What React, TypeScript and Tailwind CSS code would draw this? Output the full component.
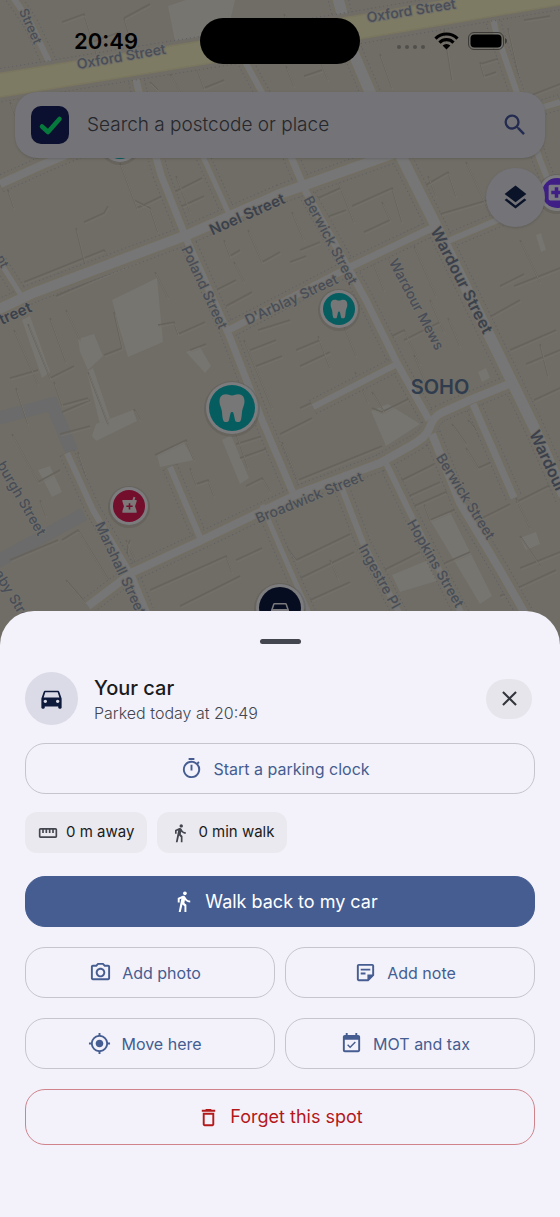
import { ButtonHTMLAttributes, ReactNode } from 'react';
import clsx from 'clsx';
import type { IconType } from 'react-icons';
import {
  MdClose,
  MdDeleteOutline,
  MdDirectionsCar,
  MdDirectionsWalk,
  MdEventAvailable,
  MdLayers,
  MdLocalHospital,
  MdLocalPharmacy,
  MdMyLocation,
  MdOutlinePhotoCamera,
  MdOutlineStickyNote2,
  MdOutlineTimer,
  MdSearch,
  MdStraighten,
} from 'react-icons/md';

const roads = [
  { d: 'M8 -10 L30 22 L51 66', w: 7 },
  { d: 'M133 66 L145 118 L161 175 L186 238 L229 335 L262 420 L293 493', w: 8 },
  { d: 'M200 150 L228 212', w: 6 },
  { d: 'M236 45 L266 100', w: 7 },
  { d: 'M0 184 L42 165 L120 132', w: 9 },
  { d: 'M0 262 L24 300', w: 6 },
  { d: 'M286 145 L306 192 L366 300 L397 363 L429 420', w: 8 },
  { d: 'M225 332 L350 267 L432 228', w: 8 },
  { d: 'M448 241 L500 219 L560 193', w: 7 },
  { d: 'M313 407 L397 364', w: 7 },
  { d: 'M488 -5 L496 32 L516 90 L540 160 L552 190', w: 7 },
  { d: 'M540 108 L560 102', w: 7 },
  { d: 'M67 453 L93 510 L133 578 L150 620', w: 7 },
  { d: 'M170 467 L201 540', w: 7 },
  { d: 'M432 434 L460 503 L500 570 L540 640', w: 9 },
  { d: 'M473 404 L492 447 L514 498', w: 8 },
  { d: 'M386 463 L410 513 L470 630', w: 7 },
  { d: 'M341 486 L363 543 L408 630', w: 7 },
  { d: 'M262 505 L280 547 L312 620', w: 6 },
  { d: 'M337 -5 L352 50 L370 92 L404 162 L434 222 L493 343 L533 425 L566 500', w: 12 },
  { d: 'M-5 311 L33 293 L187 235 L280 194 L392 154', w: 11 },
  { d: 'M514 382 L470 400 L441 413 Q433 417 429 429 Q426 437 412 445 L380 463 L300 493 L200 541 L133 572 L88 606', w: 9 },
];

// pale yards and passages between the buildings
const courts = [
  'M112 300 L157 278 L163 342 L128 357 L120 330 Z',
  'M78 339 L94 334 L103 356 L88 370 L80 352 Z',
  'M186 352 L200 347 L211 366 L205 373 Z',
  'M92 436 L96 424 L133 410 L137 421 L96 441 Z',
  'M87 372 L93 368 L110 418 L100 424 Z',
  'M157 455 L183 441 L194 460 L160 467 Z',
  'M371 411 L388 404 L420 424 L386 446 Z',
  'M168 6 L198 -4 L236 -4 L228 30 L176 46 Z',
  'M22 320 L30 316 L50 372 L42 378 Z',
  'M222 440 L231 435 L249 478 L240 484 Z',
  'M38 470 L50 466 L62 492 L52 497 Z',
  'M392 575 L428 560 L440 580 L400 592 Z',
  'M520 538 L536 532 L540 544 L526 550 Z',
  'M478 372 L486 368 L490 378 L482 382 Z',
  'M536 235 L541 233 L546 250 L541 252 Z',
  'M430 520 L450 512 L492 596 L480 604 Z',
];

// walls, drawn as the shaded side of each building
const walls = [
  'M62 22 L84 14 L96 52 M124 18 L150 4 M124 18 L132 44 M92 42 L120 32',
  'M10 102 L22 132 M34 98 L46 126 M60 92 L66 108 M150 82 L158 90 M196 66 L204 88 L224 80 M170 74 L180 92',
  'M24 282 L104 250 L110 262 M14 208 L8 190 M56 296 L186 240',
  'M120 163 L137 208 L162 196 M76 228 L86 268 M84 222 L104 213 L108 206 M134 200 L150 208 L158 232',
  'M174 192 L202 178 M182 206 L204 196 M176 176 L190 212',
  'M155 272 L168 298 M196 258 L206 286 M224 240 L230 256 L240 250 M234 262 L244 282 M262 262 L280 252 M248 230 L262 262',
  'M216 290 L236 280 M226 306 L252 292',
  'M14 330 L38 384 M28 324 L50 378 L74 366 M50 318 L66 362 M66 310 L80 340 M104 355 L122 348 L114 312 M10 378 L38 370',
  'M16 388 L28 424 M54 382 L62 405 L88 398 M62 412 L90 400 M88 372 L108 424 M134 409 L140 420 M155 455 L186 440 L194 460',
  'M158 325 L174 322 L178 334 L205 322 M190 350 L206 344 M60 434 L90 426 M78 452 L92 494 M12 434 L38 482 L60 470 M40 500 L46 516',
  'M168 470 L190 520 M190 468 L196 484 L208 480 L214 496 M126 540 L136 562 L148 564 L186 546 M130 540 Q124 552 132 562',
  'M62 540 L78 530 L112 586 M10 560 L58 540 M66 580 L90 608 M150 590 L226 556 L232 572 M180 606 L240 576 M236 560 L262 548',
  'M236 444 L262 436 M240 458 L268 448 M246 486 L262 478 L270 492 M250 350 L276 340 M256 366 L282 356 M228 410 L248 468',
  'M244 340 L272 408 M258 330 L290 320 M296 350 L320 340 M300 366 L330 352 M318 336 L330 368 M300 408 L330 394 M344 326 L356 356',
  'M280 434 L312 418 M282 442 L298 480 L382 446 M372 408 L382 412 L410 398 M372 392 L384 412 M355 372 L368 402',
  'M414 355 L428 388 M404 340 L440 322 M392 336 L404 330 L420 364 M430 300 L444 332 M448 318 L460 346',
  'M296 560 L350 534 M292 582 L354 552 M284 544 L296 560 M330 560 L338 578 M350 500 L380 572 L420 552 M310 600 L350 582',
  'M394 484 L434 464 M400 500 L440 482 M414 506 L450 490 L458 508 L430 520 L424 504 M466 448 L478 468 L500 458 M468 420 L484 440',
  'M478 436 L488 432 M452 424 L466 444 M516 498 L530 528 M516 502 L556 482 M520 536 L540 566 M470 524 L510 504 M520 568 L560 552',
  'M424 186 L448 172 L456 196 M428 176 L436 196 M440 214 L488 200 M466 162 L492 218 M446 246 L480 320 M484 320 L520 300 M500 286 L524 274',
  'M318 198 L340 188 M336 176 L354 222 M324 218 L346 210 M352 206 L392 188 L402 222 M364 232 L390 220 L382 202 M392 240 L420 226',
  'M300 250 L320 242 M292 212 L304 240 M290 262 L306 256 M336 262 L346 258 M372 260 L384 290 M386 252 L398 280 M414 246 L436 296',
  'M480 64 L500 58 M480 62 L484 76 L496 72 M444 30 L452 80 M508 28 L524 98 L560 84 M524 20 L550 16 M380 54 L392 88',
  'M284 14 L300 50 M300 60 L330 48 M304 76 L322 70 M286 66 L294 86 M320 60 L328 80',
  'M510 350 L556 330 M526 364 L560 350 M534 400 L560 388 M540 344 L548 376 M520 240 L540 282 M514 286 L560 268',
  'M438 566 L470 552 M500 596 L556 570 M484 430 L490 446',
];

const labels = [
  { text: 'Street', x: 31, y: 26, r: 66 },
  { text: 'Oxford Street', x: 121, y: 56, r: -10, size: 14 },
  { text: 'Oxford Street', x: 411, y: 10, r: -9, size: 14 },
  { text: 'Noel Street', x: 247, y: 214, r: -24, size: 15, bold: true },
  { text: 'Poland Street', x: 205, y: 287, r: 65, size: 14 },
  { text: 'Berwick Street', x: 331, y: 240, r: 62, size: 14 },
  { text: "D'Arblay Street", x: 291, y: 299, r: -25, size: 14 },
  { text: 'Wardour Street', x: 462, y: 280, r: 63, size: 16, bold: true },
  { text: 'Wardour Mews', x: 417, y: 304, r: 62, size: 14 },
  { text: 'treet', x: 15, y: 313, r: -24, size: 15, bold: true },
  { text: 'nt', x: 3, y: 261, r: 64 },
  { text: 'Broadwick Street', x: 309, y: 497, r: -22, size: 14 },
  { text: 'Berwick Street', x: 466, y: 496, r: 58, size: 14 },
  { text: 'Wardour Street', x: 559, y: 484, r: 65, size: 16, bold: true },
  { text: 'Hopkins Street', x: 436, y: 563, r: 60, size: 14 },
  { text: 'Ingestre Pl', x: 380, y: 576, r: 61, size: 14 },
  { text: 'Marshall Street', x: 121, y: 568, r: 65, size: 14 },
  { text: 'burgh Street', x: 22, y: 498, r: 60, size: 14 },
  { text: 'aby Street', x: 16, y: 600, r: 59, size: 14 },
];

const ToothIcon = ({ x, y, size }: { x: number; y: number; size: number }) => (
  <svg x={x} y={y} width={size} height={size} viewBox="0 0 24 24" fill="#777777">
    <path d="M7 1C3.6 1 2 3.400 2 6.800c0 3 1.300 4.400 1.800 7.200.5 2.700.3 5.200 1.100 7.500.4 1.200.9 1.600 2 1.600h1c1 0 1.500-.5 1.700-1.500l1.100-5c.2-1 .6-1.500 1.300-1.500s1.100.5 1.300 1.500l1.100 5c.2 1 .7 1.500 1.700 1.500h1c1.100 0 1.600-.4 2-1.600.8-2.300.6-4.800 1.100-7.500.5-2.800 1.800-4.200 1.800-7.200C22 3.400 20.400 1 17 1c-2 0-3.200.9-5 .9S9 1 7 1Z" />
  </svg>
);

const Pin = ({
  x,
  y,
  r,
  fill,
  children,
}: {
  x: number;
  y: number;
  r: number;
  fill: string;
  children?: ReactNode;
}) => (
  <g>
    <circle cx={x} cy={y + 1} r={r + 2} fill="#4c4945" opacity={0.25} />
    <circle cx={x} cy={y} r={r} fill="#7c7c7e" />
    <circle cx={x} cy={y} r={r - 3} fill={fill} />
    {children}
  </g>
);

const StreetMap = () => (
  <svg
    className="absolute inset-0 size-full font-[Inter,sans-serif]"
    viewBox="0 0 560 645"
    preserveAspectRatio="xMidYMin slice"
    aria-hidden="true"
  >
    <rect width="560" height="645" fill="#706d66" />
    {courts.map(d => (
      <path key={d} d={d} fill="#767570" />
    ))}
    <path d="M-5 419 L52 404 L72 452" fill="none" stroke="#6b6b6b" strokeWidth={13} />
    <path d="M-5 563 L84 514" fill="none" stroke="#6b6b6b" strokeWidth={13} />
    {walls.map(d => (
      <g key={d} fill="none">
        <path d={d} stroke="#66625c" strokeWidth={1.5} />
        <path d={d} stroke="#75726b" strokeWidth={1} transform="translate(1 2)" />
      </g>
    ))}

    {/* pavement dots, then casing, then the carriageway */}
    {roads.map(({ d, w }) => (
      <g key={d} fill="none">
        <path d={d} stroke="#5f5f62" strokeWidth={w + 9} strokeDasharray="1 3" />
        <path d={d} stroke="#706d66" strokeWidth={w + 7} />
      </g>
    ))}
    {roads.map(({ d, w }) => (
      <path key={d} d={d} fill="none" stroke="#736e60" strokeWidth={w + 1} />
    ))}
    {roads.map(({ d, w }) => (
      <path key={d} d={d} fill="none" stroke="#767677" strokeWidth={w - 1} />
    ))}
    <g fill="none">
      <path d="M-5 86 L200 53 L360 27 L565 -8" stroke="#5f5f62" strokeWidth={34} strokeDasharray="1 3" />
      <path d="M-5 86 L200 53 L360 27 L565 -8" stroke="#706d66" strokeWidth={32} />
      <path d="M-5 86 L200 53 L360 27 L565 -8" stroke="#7a765f" strokeWidth={25} />
      <path d="M-5 86 L200 53 L360 27 L565 -8" stroke="#7d7b64" strokeWidth={22} />
    </g>

    {labels.map(({ text, x, y, r, size = 13, bold }) => (
      <text
        key={`${text}-${x}`}
        transform={`translate(${x} ${y}) rotate(${r})`}
        textAnchor="middle"
        dominantBaseline="central"
        fontSize={size}
        fontWeight={bold ? 600 : 500}
        fill={bold ? '#3b414b' : '#484d56'}
        stroke="#72706b"
        strokeWidth={2}
        paintOrder="stroke"
      >
        {text}
      </text>
    ))}
    <text
      x={440}
      y={387}
      textAnchor="middle"
      dominantBaseline="central"
      fontSize={20}
      fontWeight={600}
      fill="#2f3c4e"
    >
      SOHO
    </text>

    <Pin x={120} y={143} r={19} fill="#065d60" />
    <Pin x={339} y={309} r={19} fill="#065d60">
      <ToothIcon x={329} y={299} size={20} />
    </Pin>
    <Pin x={232} y={408} r={26} fill="#065d60">
      <ToothIcon x={217} y={393} size={30} />
    </Pin>
    <Pin x={129} y={506} r={19} fill="#730f2d">
      <MdLocalPharmacy x={120} y={496} size={19} color="#7d797b" />
    </Pin>
    <Pin x={557} y={193} r={18} fill="#3f1f86">
      <MdLocalHospital x={546} y={182} size={21} color="#7b7982" />
    </Pin>
    <Pin x={280} y={608} r={24} fill="#070d20">
      <MdDirectionsCar x={268} y={598} size={24} color="#7a7a7c" />
    </Pin>
  </svg>
);

const StatusBar = () => (
  <div className="grid grid-cols-[1fr_160px_1fr] items-center pt-[18px]">
    <div className="pl-3 text-center text-[22px] leading-7 font-semibold text-black">20:49</div>
    <div className="h-[46px] rounded-full bg-black" />
    <div className="flex items-center justify-center gap-[9px] pr-4">
      <div className="flex gap-1 pt-3">
        {[0, 1, 2, 3].map(dot => (
          <span key={dot} className="size-1 rounded-full bg-[#514f4b]" />
        ))}
      </div>
      <svg width="25" height="18" viewBox="0 0 25 18" aria-hidden="true">
        <g fill="none" stroke="#000" strokeWidth="3.200">
          <path d="M1.500 6.600 A15.500 15.500 0 0 1 23.500 6.600" />
          <path d="M5.500 10.600 A9.900 9.900 0 0 1 19.500 10.600" />
        </g>
        <path d="M12.500 17.500 L8.600 13.600 A5.500 5.500 0 0 1 16.400 13.600 Z" />
      </svg>
      <svg width="39" height="18" viewBox="0 0 39 18" aria-hidden="true">
        <rect x="0.500" y="0.500" width="35" height="17" rx="5.500" fill="none" stroke="#3c3b38" />
        <rect x="2.500" y="2.500" width="31" height="13" rx="4" />
        <path d="M37 6 Q39 7 39 9 Q39 11 37 12 Z" fill="#3c3b38" />
      </svg>
    </div>
  </div>
);

const SearchBar = () => (
  <form className="mx-[15px] mt-7 flex h-[66px] items-center rounded-[22px] bg-[#747378] px-4 shadow-sm">
    <svg width="38" height="38" viewBox="0 0 38 38" className="shrink-0" aria-hidden="true">
      <rect width="38" height="38" rx="10" fill="#0b1030" />
      <path
        d="M11 20.500 L17 26 L28.500 13"
        fill="none"
        stroke="#067a3c"
        strokeWidth="4.500"
        strokeLinecap="round"
        strokeLinejoin="round"
      />
    </svg>
    <input
      type="search"
      aria-label="Search a postcode or place"
      placeholder="Search a postcode or place"
      className="ml-[18px] min-w-0 flex-1 bg-transparent text-[19px] font-light text-[#26272b] outline-none placeholder:text-[#26272b]"
    />
    <button type="submit" aria-label="Search" className="text-[#232c50]">
      <MdSearch size={28} />
    </button>
  </form>
);

const SheetButton = ({
  icon: Icon,
  label,
  variant = 'outline',
  ...rest
}: {
  icon: IconType;
  label: string;
  variant?: 'outline' | 'filled' | 'danger';
} & ButtonHTMLAttributes<HTMLButtonElement>) => (
  <button
    type="button"
    className={clsx(
      'flex w-full items-center justify-center gap-[10px] rounded-[20px] border',
      variant === 'outline' && 'h-[51px] border-[#c6c5cd] pr-[10px] text-base text-[#455d91]',
      variant === 'filled' && 'h-[51px] border-[#455d91] bg-[#455d91] pr-[10px] text-lg text-white',
      variant === 'danger' && 'h-14 border-[#d0838b] text-lg text-[#b3181a]'
    )}
    {...rest}
  >
    <Icon size={23} />
    {label}
  </button>
);

const Chip = ({ icon: Icon, label }: { icon: IconType; label: string }) => (
  <div className="flex h-[41px] items-center gap-2 rounded-xl bg-[#eae9ef] px-[13px] text-[15px] text-[#1a1b20]">
    <Icon size={20} className="text-[#44464f]" />
    {label}
  </div>
);

const CarSheet = () => (
  <section className="relative -mt-[34px] rounded-t-[34px] bg-[#f3f2fa] px-[25px] pt-7 pb-[72px]">
    <div className="mx-auto h-[5px] w-[41px] rounded-full bg-[#44464f]" />

    <header className="mt-7 flex items-center">
      <div className="flex size-[53px] items-center justify-center rounded-full bg-[#dadbe6] text-[#0d1a3c]">
        <MdDirectionsCar size={27} />
      </div>
      <div className="ml-4 flex-1 pt-[3px]">
        <h1 className="text-xl leading-[26px] font-medium text-[#1a1b20]">Your car</h1>
        <p className="text-base font-light text-[#44464f]">Parked today at 20:49</p>
      </div>
      <button
        type="button"
        aria-label="Close"
        className="mr-[3px] flex h-10 w-[46px] items-center justify-center rounded-full bg-[#e6e5ec] text-[#33353d]"
      >
        <MdClose size={25} />
      </button>
    </header>

    <div className="mt-[18px]">
      <SheetButton icon={MdOutlineTimer} label="Start a parking clock" />
    </div>

    <div className="mt-[18px] flex gap-[10px]">
      <Chip icon={MdStraighten} label="0 m away" />
      <Chip icon={MdDirectionsWalk} label="0 min walk" />
    </div>

    <div className="mt-[23px] flex flex-col gap-5">
      <SheetButton icon={MdDirectionsWalk} label="Walk back to my car" variant="filled" />
      <div className="grid grid-cols-2 gap-x-[10px] gap-y-5">
        <SheetButton icon={MdOutlinePhotoCamera} label="Add photo" />
        <SheetButton icon={MdOutlineStickyNote2} label="Add note" />
        <SheetButton icon={MdMyLocation} label="Move here" />
        <SheetButton icon={MdEventAvailable} label="MOT and tax" />
      </div>
      <SheetButton icon={MdDeleteOutline} label="Forget this spot" variant="danger" />
    </div>
  </section>
);

export default function App() {
  return (
    <main className="flex min-h-screen flex-col bg-[#f3f2fa] font-[Inter,sans-serif]">
      <section className="relative min-h-[645px] flex-1 overflow-hidden">
        <StreetMap />
        <div className="relative flex flex-col">
          <StatusBar />
          <SearchBar />
          <button
            type="button"
            aria-label="Map layers"
            className="mt-[10px] mr-[15px] flex size-[59px] items-center justify-center self-end rounded-full bg-[#747378] text-[#0a1328] shadow-sm"
          >
            <MdLayers size={29} />
          </button>
        </div>
      </section>
      <CarSheet />
    </main>
  );
}
